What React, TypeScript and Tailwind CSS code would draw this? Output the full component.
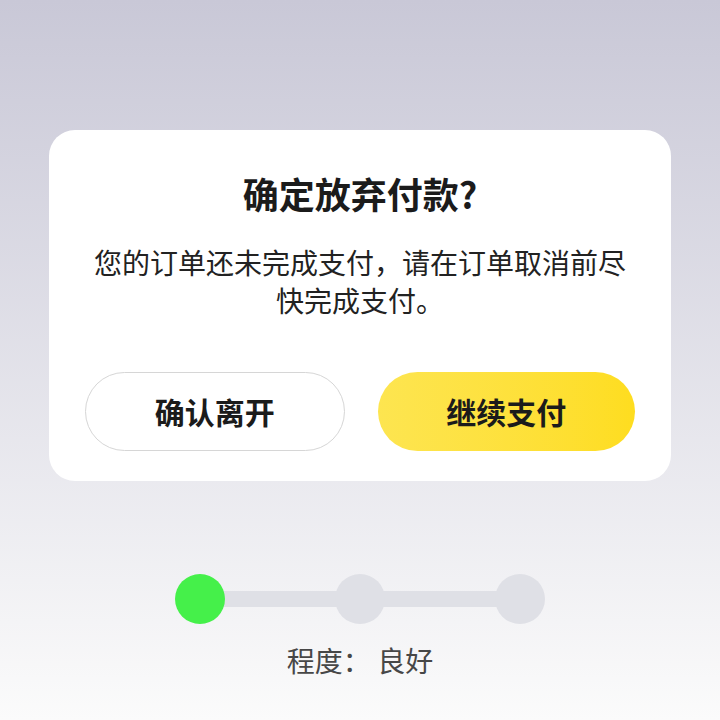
export default function App() {
  const steps = [true, false, false];

  return (
    <div
      className="flex h-[720px] w-[720px] flex-col items-center bg-gradient-to-b from-[#c9c8d7] to-[#fbfbfb] pt-[130px]"
      style={{ fontFamily: '"Noto Sans CJK SC", "Noto Sans", sans-serif' }}>
      <div className="flex w-[622px] flex-col items-center rounded-[26px] bg-white pb-[30px] pt-[43px]">
        <h2 className="text-[36px] font-bold leading-[40px] text-[#1b1b1b]">确定放弃付款?</h2>
        <p className="mt-[30px] px-[40px] text-center text-[28px] leading-[38px] text-[#222]">
          您的订单还未完成支付，请在订单取消前尽快完成支付。
        </p>
        <div className="mt-[53px] flex w-full gap-[33px] px-[36px]">
          <button className="h-[79px] flex-1 rounded-full border border-[#d6d6d6] bg-white text-[30px] font-bold text-[#1b1b1b]">
            确认离开
          </button>
          <button className="h-[79px] flex-1 rounded-full bg-gradient-to-r from-[#fde550] to-[#fedd1f] text-[30px] font-bold text-[#1b1b1b]">
            继续支付
          </button>
        </div>
      </div>

      <div className="relative mt-[93px] flex w-[370px] items-center justify-between">
        <div className="absolute left-[25px] right-[25px] top-[17px] h-[16px] bg-[#dfe0e6]" />
        {steps.map((on, i) => (
          <div
            key={i}
            className={`relative h-[50px] w-[50px] rounded-full ${on ? "bg-[#45f04a]" : "bg-[#dfe0e6]"}`}
          />
        ))}
      </div>
      <p className="mt-[18px] text-[28px] leading-[36px] text-[#474747]">程度： 良好</p>
    </div>
  );
}
